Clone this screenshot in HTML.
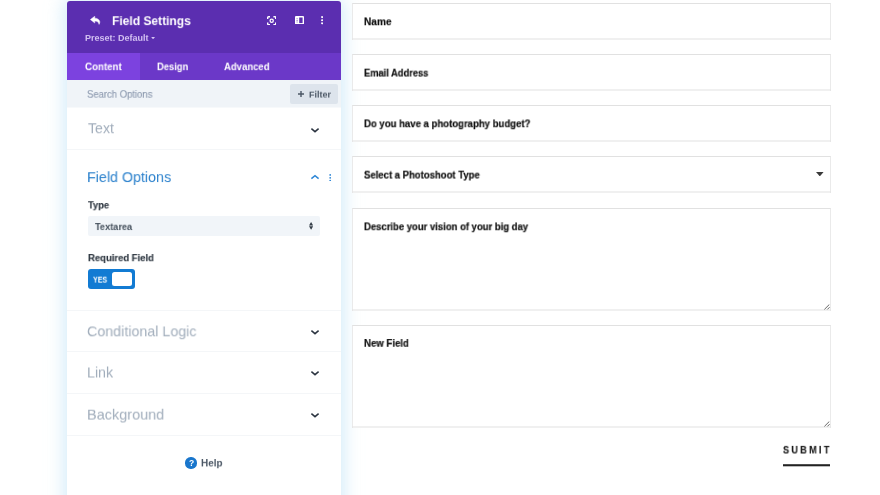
<!DOCTYPE html>
<html><head><meta charset="utf-8">
<style>
*{box-sizing:border-box;margin:0;padding:0}
html,body{width:880px;height:495px;overflow:hidden;background:#fff;font-family:"Liberation Sans","DejaVu Sans",sans-serif;}
.ab{position:absolute}
.tx{position:absolute;white-space:nowrap;transform-origin:0 0;will-change:transform}
.panel{position:absolute;left:67px;top:1px;width:273.5px;height:520px;background:#fff;border-radius:3px 3px 0 0;box-shadow:0 0 18px 3px rgba(180,220,245,.58);}
.hdr{position:absolute;left:67px;top:1px;width:273.5px;height:52px;background:#5b2eb0;border-radius:3px 3px 0 0}
.tabs{position:absolute;left:67px;top:53px;width:273.5px;height:27px;background:#6b38c8}
.act{position:absolute;left:67px;top:53px;width:72.6px;height:27px;background:#7c42df}
.search{position:absolute;left:67px;top:80px;width:273.5px;height:28px;background:linear-gradient(to bottom,#f0f4f8 0 27px,#f7f9fb 27px 28px)}
.fbtn{position:absolute;left:290px;top:84px;width:48px;height:20px;background:#dde4ec;border-radius:2px}
.sep{position:absolute;left:67px;width:273.5px;height:1px;background:#f4f6f8}
.f{position:absolute;left:352px;width:479px;border:1px solid #e1e1e1;border-left-color:#eaeaea;border-right-color:#eaeaea;border-bottom:0;background:#fff}
.f i{position:absolute;left:-1px;right:-1px;bottom:0;height:1px;background:#e1e1e1;will-change:transform;transform:translateY(-0.5px)}
</style></head><body>
<div class="panel"></div>
<div class="hdr"></div><div class="tabs"></div><div class="act"></div>
<div class="search"></div><div class="fbtn"></div>
<svg class="ab" style="left:89.8px;top:16.2px" width="11.4" height="8.6" viewBox="0 0 13 10"><path d="M5.4 0.2 L0.3 4.2 L5.4 8.2 V5.9 C8.2 5.9 9.8 6.9 10.4 9.8 C12.8 6.2 10.2 2.7 5.4 2.5 Z" fill="#fff" stroke="#fff" stroke-width="0.5" stroke-linejoin="round"/></svg>
<svg class="ab" style="left:151.3px;top:36.6px" width="4.2" height="2.3" viewBox="0 0 5 3"><path d="M0 0H5L2.5 3Z" fill="#d5c3f3"/></svg>
<svg class="ab" style="left:267px;top:15.5px" width="9.4" height="9.4" viewBox="0 0 10 10" fill="none" stroke="#fff" stroke-width="1.5"><path d="M0.75 3.2V1.6Q0.75 0.75 1.6 0.75H3.2M6.8 0.75H8.4Q9.25 0.75 9.25 1.6V3.2M9.25 6.8V8.4Q9.25 9.25 8.4 9.25H6.8M3.2 9.25H1.6Q0.75 9.25 0.75 8.4V6.8"/><circle cx="5" cy="5" r="1.7" stroke-width="1.4"/></svg>
<svg class="ab" style="left:294.6px;top:15.8px" width="9" height="8.6" viewBox="0 0 9 8.6"><rect x="0" y="0" width="9" height="8.6" rx="1" fill="#fff"/><rect x="4.2" y="1.5" width="3.4" height="5.6" fill="#5b2eb0"/><rect x="1.3" y="2.4" width="1.7" height="0.8" fill="#5b2eb0" opacity=".55"/><rect x="1.3" y="4" width="1.7" height="0.8" fill="#5b2eb0" opacity=".55"/><rect x="1.3" y="5.6" width="1.7" height="0.8" fill="#5b2eb0" opacity=".55"/></svg>
<svg class="ab" style="left:320.8px;top:16.2px" width="2.2" height="8.4" viewBox="0 0 2.2 8.4" fill="#fff"><circle cx="1.1" cy="1.1" r="1.05"/><circle cx="1.1" cy="4.2" r="1.05"/><circle cx="1.1" cy="7.3" r="1.05"/></svg>
<svg class="ab" style="left:298.2px;top:91.4px" width="6" height="6" viewBox="0 0 6.4 6.4" stroke="#4c5866" stroke-width="1.5"><path d="M3.2 0V6.4M0 3.2H6.4"/></svg>

<div class="sep" style="top:149px"></div>
<div class="sep" style="top:310px"></div>
<div class="sep" style="top:351px"></div>
<div class="sep" style="top:393px"></div>
<div class="sep" style="top:435px"></div>
<svg class="ab" style="left:310px;top:126.9px" width="10" height="7" viewBox="0 0 10 7" fill="none" stroke="#2b3440" stroke-width="1.5"><path d="M1.4 1.7L5 4.7L8.6 1.7"/></svg>
<svg class="ab" style="left:310px;top:173.8px" width="10" height="7" viewBox="0 0 10 7" fill="none" stroke="#2e86d6" stroke-width="1.5"><path d="M1.4 4.7L5 1.7L8.6 4.7"/></svg>
<svg class="ab" style="left:329.2px;top:173.6px" width="2.4" height="7.6" viewBox="0 0 2.4 7.6" fill="#2e86d6"><circle cx="1.2" cy="0.9" r="0.9"/><circle cx="1.2" cy="3.8" r="0.9"/><circle cx="1.2" cy="6.7" r="0.9"/></svg>
<svg class="ab" style="left:309.8px;top:328.6px" width="10" height="7" viewBox="0 0 10 7" fill="none" stroke="#2b3440" stroke-width="1.5"><path d="M1.4 1.7L5 4.7L8.6 1.7"/></svg>
<svg class="ab" style="left:309.8px;top:370.2px" width="10" height="7" viewBox="0 0 10 7" fill="none" stroke="#2b3440" stroke-width="1.5"><path d="M1.4 1.7L5 4.7L8.6 1.7"/></svg>
<svg class="ab" style="left:309.8px;top:411.6px" width="10" height="7" viewBox="0 0 10 7" fill="none" stroke="#2b3440" stroke-width="1.5"><path d="M1.4 1.7L5 4.7L8.6 1.7"/></svg>

<div class="ab" style="left:87.5px;top:216px;width:232.5px;height:20px;background:#f1f5f9;border-radius:2px"></div>
<svg class="ab" style="left:308.6px;top:222.3px" width="4.2" height="7.8" viewBox="0 0 4.2 7.8" fill="#333c47"><path d="M2.1 0L4.2 3.5H0Z M2.1 7.8L4.2 4.3H0Z"/></svg>
<div class="ab" style="left:87.5px;top:268.8px;width:47.6px;height:20px;background:#127bd3;border-radius:3px"></div>
<div class="ab" style="left:112px;top:272px;width:20px;height:14px;background:#fff;border-radius:2.5px"></div>

<div class="ab" style="left:185.4px;top:457.4px;width:11.2px;height:11.2px;border-radius:50%;background:#1976cc"></div>

<div class="f" style="top:3px;height:37px"><i></i></div>
<div class="f" style="top:54px;height:37px"><i></i></div>
<div class="f" style="top:105px;height:37px"><i></i></div>
<div class="f" style="top:156px;height:37px"><i></i></div>
<svg class="ab" style="left:816px;top:171.8px" width="7.6" height="4.4" viewBox="0 0 7.6 4.4" fill="#3a3a3a"><path d="M0 0H7.6L3.8 4.4Z"/></svg>
<div class="f" style="top:208px;height:103px"><i></i></div>
<svg class="ab" style="left:824.2px;top:303.9px" width="6" height="6" viewBox="0 0 6 6" stroke="#555" stroke-width="0.9"><path d="M0.4 5.4L5.3 0.5M3.4 5.4L5.6 3.2"/></svg>
<div class="f" style="top:325px;height:103px"><i></i></div>
<svg class="ab" style="left:824.2px;top:420.9px" width="6" height="6" viewBox="0 0 6 6" stroke="#555" stroke-width="0.9"><path d="M0.4 5.4L5.3 0.5M3.4 5.4L5.6 3.2"/></svg>
<div class="ab" style="left:782.8px;top:464px;width:47.7px;height:3px;background:linear-gradient(to bottom,rgba(34,34,34,.8) 0 1px,#222 1px 2px,rgba(34,34,34,.3) 2px 3px)"></div>
<span class="tx" style="left:112.11px;top:13px;font-size:13px;line-height:16px;color:#fff;font-weight:700;transform:translateY(0.25px) scale(0.9250,0.9884)">Field Settings</span>
<span class="tx" style="left:84.50px;top:30px;font-size:9px;line-height:16px;color:#d5c3f3;font-weight:700;transform:translateY(0.25px) scale(1.0000,0.9621)">Preset: Default</span>
<span class="tx" style="left:84.76px;top:59px;font-size:10px;line-height:16px;color:#fff;font-weight:700;transform:translateY(0.75px) scale(0.9733,0.9497)">Content</span>
<span class="tx" style="left:157.03px;top:59px;font-size:10px;line-height:16px;color:#fff;font-weight:700;transform:translateY(0.75px) scale(0.9385,0.9497)">Design</span>
<span class="tx" style="left:224.01px;top:59px;font-size:10px;line-height:16px;color:#fff;font-weight:700;transform:translateY(0.75px) scale(0.9521,0.9497)">Advanced</span>
<span class="tx" style="left:87.03px;top:87px;font-size:10px;line-height:16px;color:#8e9bb0;font-weight:400;-webkit-text-stroke:0.15px #8e9bb0;transform:translateY(0.25px) scale(0.9487,0.9497)">Search Options</span>
<span class="tx" style="left:309.00px;top:86px;font-size:9px;line-height:16px;color:#4c5866;font-weight:700;transform:translateY(0.75px) scale(1.0000,0.9777)">Filter</span>
<span class="tx" style="left:87.75px;top:120px;font-size:14px;line-height:16px;color:#a2aebc;font-weight:400;transform:translateY(0.25px) scale(1.0098,0.9976)">Text</span>
<span class="tx" style="left:87.01px;top:169px;font-size:14.5px;line-height:16px;color:#2a80cc;font-weight:400;transform:translateY(0.25px) scale(0.9851,0.9825)">Field Options</span>
<span class="tx" style="left:88.00px;top:198px;font-size:10px;line-height:16px;color:#2f3842;font-weight:700;-webkit-text-stroke:0.15px #2f3842;transform:translateY(0.5px) scale(0.9333,0.9078)">Type</span>
<span class="tx" style="left:94.50px;top:220px;font-size:10px;line-height:16px;color:#48535f;font-weight:700;transform:translateY(0.25px) scale(0.9198,0.8939)">Textarea</span>
<span class="tx" style="left:87.53px;top:251px;font-size:10px;line-height:16px;color:#2f3842;font-weight:700;-webkit-text-stroke:0.15px #2f3842;transform:translateY(0.25px) scale(0.9489,0.9078)">Required Field</span>
<span class="tx" style="left:93.09px;top:271px;font-size:8.5px;line-height:16px;color:#fff;font-weight:700;transform:translateY(0.75px) scale(0.8364,0.9859)">YES</span>
<span class="tx" style="left:87.26px;top:323px;font-size:14.5px;line-height:16px;color:#a2aebc;font-weight:400;transform:translateY(0.5px) scale(0.9841,0.9825)">Conditional Logic</span>
<span class="tx" style="left:86.98px;top:364px;font-size:14px;line-height:16px;color:#a2aebc;font-weight:400;transform:translateY(0.5px) scale(1.0204,0.9976)">Link</span>
<span class="tx" style="left:87.00px;top:406px;font-size:14.5px;line-height:16px;color:#a2aebc;font-weight:400;transform:translateY(0.75px) scale(0.9967,0.9825)">Background</span>
<span class="tx" style="left:200.60px;top:456px;font-size:10px;line-height:16px;color:#4c5866;font-weight:700;transform:translateY(0.25px) scale(0.9952,0.9218)">Help</span>
<span class="tx" style="left:363.50px;top:14px;font-size:10px;line-height:16px;color:#111;font-weight:700;-webkit-text-stroke:0.2px #111;transform:translateY(0.5px) scale(1.0093,0.9777)">Name</span>
<span class="tx" style="left:363.52px;top:65px;font-size:10px;line-height:16px;color:#111;font-weight:700;-webkit-text-stroke:0.2px #111;transform:translateY(0.75px) scale(0.9309,0.9777)">Email Address</span>
<span class="tx" style="left:363.51px;top:116px;font-size:10px;line-height:16px;color:#111;font-weight:700;-webkit-text-stroke:0.2px #111;transform:translateY(0.5px) scale(0.9567,0.9777)">Do you have a photography budget?</span>
<span class="tx" style="left:363.51px;top:167px;font-size:10px;line-height:16px;color:#111;font-weight:700;-webkit-text-stroke:0.2px #111;transform:translateY(0.75px) scale(0.9525,0.9777)">Select a Photoshoot Type</span>
<span class="tx" style="left:363.51px;top:219px;font-size:10px;line-height:16px;color:#111;font-weight:700;-webkit-text-stroke:0.2px #111;transform:translateY(0.5px) scale(0.9493,0.9777)">Describe your vision of your big day</span>
<span class="tx" style="left:363.51px;top:336px;font-size:10px;line-height:16px;color:#111;font-weight:700;-webkit-text-stroke:0.2px #111;transform:scale(0.9620,0.9777)">New Field</span>
<span class="tx" style="left:782.57px;top:443px;font-size:10px;line-height:16px;color:#1a1a1a;font-weight:700;letter-spacing:2.6px;-webkit-text-stroke:0.15px #1a1a1a;transform:scale(0.9034,0.9497)">SUBMIT</span>
<span class="tx" style="left:188.5px;top:458.9px;font-size:8.5px;line-height:9px;color:#fff;font-weight:700">?</span>
</body></html>
